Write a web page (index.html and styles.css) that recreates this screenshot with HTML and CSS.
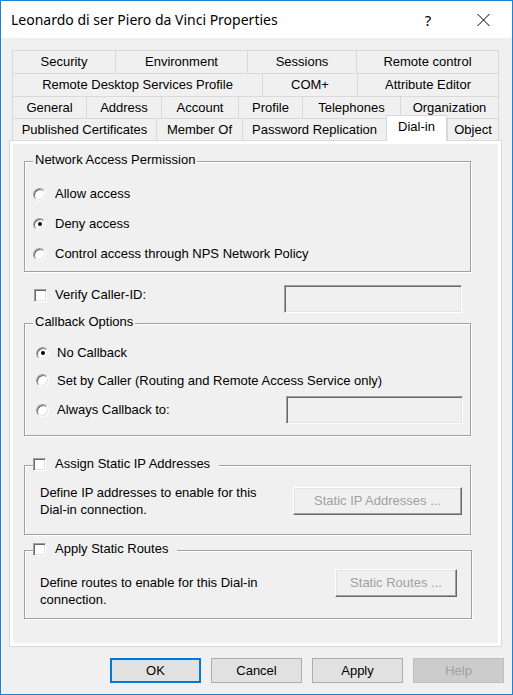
FILE: index.html
```html
<!DOCTYPE html>
<html>
<head>
<meta charset="utf-8">
<title>Properties</title>
<link rel="stylesheet" href="styles.css">
</head>
<body>
<div class="window">
  <div class="titlebar">
    <span class="title">Leonardo di ser Piero da Vinci Properties</span>
    <span class="capbtn help">?</span>
    <span class="capbtn close"><svg width="13" height="12" viewBox="0 0 13 12"><path d="M0.5 0 L12.5 12 M12.5 0 L0.5 12" stroke="#000" stroke-width="1" fill="none"/></svg></span>
  </div>
  <div class="client">
    <div class="tabs">
      <div class="tabrow r1">
        <div class="tab">Security</div>
        <div class="tab">Environment</div>
        <div class="tab">Sessions</div>
        <div class="tab last">Remote control</div>
      </div>
      <div class="tabrow r2">
        <div class="tab">Remote Desktop Services Profile</div>
        <div class="tab">COM+</div>
        <div class="tab last">Attribute Editor</div>
      </div>
      <div class="tabrow r3">
        <div class="tab">General</div>
        <div class="tab">Address</div>
        <div class="tab">Account</div>
        <div class="tab">Profile</div>
        <div class="tab">Telephones</div>
        <div class="tab last">Organization</div>
      </div>
      <div class="tabrow r4">
        <div class="tab">Published Certificates</div>
        <div class="tab">Member Of</div>
        <div class="tab">Password Replication</div>
        <div class="tab sel">Dial-in</div>
        <div class="tab last">Object</div>
      </div>
    </div>
    <div class="pane">
      <div class="page">
        <div class="group g1">
          <div class="legend">Network Access Permission</div>
          <div class="opts">
            <div class="row"><span class="radio"></span><span class="lbl">Allow access</span></div>
            <div class="row"><span class="radio on"></span><span class="lbl">Deny access</span></div>
            <div class="row"><span class="radio"></span><span class="lbl">Control access through NPS Network Policy</span></div>
          </div>
        </div>

        <div class="verify">
          <div class="chkline"><span class="check"></span><span class="lbl">Verify Caller-ID:</span></div>
          <div class="edit e1"></div>
        </div>

        <div class="group g2">
          <div class="legend">Callback Options</div>
          <div class="opts2">
            <div class="row2 a"><span class="radio on"></span><span class="lbl">No Callback</span></div>
            <div class="row2 b"><span class="radio"></span><span class="lbl">Set by Caller (Routing and Remote Access Service only)</span></div>
            <div class="row2 c"><span class="radio"></span><span class="lbl">Always Callback to:</span><div class="edit e2"></div></div>
          </div>
        </div>

        <div class="group g3">
          <div class="legend chklegend"><span class="check"></span><span class="lbl">Assign Static IP Addresses</span></div>
          <div class="gbody centered">
            <div class="desc">Define IP addresses to enable for this<br>Dial-in connection.</div>
            <div class="pbtn ip">Static IP Addresses ...</div>
          </div>
        </div>

        <div class="group g4">
          <div class="legend chklegend"><span class="check"></span><span class="lbl">Apply Static Routes</span></div>
          <div class="gbody top">
            <div class="desc">Define routes to enable for this Dial-in<br>connection.</div>
            <div class="pbtn routes">Static Routes ...</div>
          </div>
        </div>
      </div>
    </div>
    <div class="buttons">
      <div class="btn default">OK</div>
      <div class="btn">Cancel</div>
      <div class="btn">Apply</div>
      <div class="btn disabled">Help</div>
    </div>
  </div>
</div>
</body>
</html>
```

FILE: styles.css
```css
* { box-sizing: border-box; }
html, body { margin: 0; padding: 0; }
body {
  width: 513px;
  height: 695px;
  font-family: "Liberation Sans", Arial, sans-serif;
  font-size: 13px;
  line-height: 16px;
  color: #000;
  background: #f0f0f0;
}
.window {
  width: 513px;
  height: 695px;
  border: 1px solid #1883d7;
  display: flex;
  flex-direction: column;
  background: #f0f0f0;
}
.titlebar {
  height: 37px;
  flex: none;
  background: #fff;
  display: flex;
  align-items: center;
}
.title {
  flex: 1;
  padding-left: 10px;
  font-family: "Noto Sans", sans-serif;
  font-size: 14px;
  color: #000;
}
.capbtn {
  width: 56px;
  height: 37px;
  display: flex;
  align-items: center;
  justify-content: center;
}
.help {
  font-family: "Noto Sans", sans-serif;
  font-size: 15px;
}
.close { padding-right: 2px; }
.client {
  flex: 1;
  display: flex;
  flex-direction: column;
  padding: 12px 8px 0 8px;
}
.tabs {
  margin-left: 3px;
  width: 487px;
  position: relative;
  z-index: 1;
}
.tabrow { display: grid; }
.r1 { grid-template-columns: 103px 132px 109px 143px; height: 23px; }
.r2 { grid-template-columns: 250px 95px 142px; height: 23px; }
.r3 { grid-template-columns: 74px 75px 77px 64px 98px 99px; height: 22px; }
.r4 { grid-template-columns: 144px 86px 144px 61px 52px; height: 22px; }
.tab {
  border-top: 1px solid #d9d9d9;
  border-left: 1px solid #d9d9d9;
  background: #f0f0f0;
  display: flex;
  align-items: center;
  justify-content: center;
  white-space: nowrap;
}
.tab.last { border-right: 1px solid #d9d9d9; }
.tab.sel {
  margin: -3px 0 -1px 0;
  background: #fff;
  border-right: 1px solid #d9d9d9;
  padding-bottom: 3px;
}
.pane {
  width: 493px;
  height: 507px;
  border: 1px solid #d9d9d9;
  background: #fff;
  padding: 3px;
  flex: none;
}
.page {
  height: 100%;
  background: #f0f0f0;
  padding: 17px 0 0 11px;
}
.group {
  width: 447px;
  border: 1px solid #a0a0a0;
  box-shadow: inset 1px 1px 0 #fff, 1px 1px 0 #fff;
}
.legend {
  width: fit-content;
  margin: -10px 0 0 8px;
  padding: 0 2px;
  background: #f0f0f0;
  height: 16px;
  white-space: nowrap;
}
.chklegend {
  display: flex;
  align-items: center;
  padding: 0 9px 0 0;
}
.chklegend .lbl { margin-left: 9px; }
.opts { margin-top: 11px; padding-left: 8px; padding-bottom: 2px; }
.row { height: 30px; display: flex; align-items: center; }
.row .lbl { margin-left: 9px; }
.radio {
  width: 13px;
  height: 13px;
  flex: none;
  border-radius: 50%;
  border: 1px solid;
  border-color: #a0a0a0 #fff #fff #a0a0a0;
  background: #fff;
  box-shadow: inset 1px 1px 0 #696969, inset -1px -1px 0 #e3e3e3;
  display: flex;
  align-items: center;
  justify-content: center;
}
.radio.on::after {
  content: "";
  width: 4px;
  height: 4px;
  border-radius: 50%;
  background: #000;
}
.check {
  width: 13px;
  height: 13px;
  flex: none;
  border: 1px solid;
  border-color: #a0a0a0 #fff #fff #a0a0a0;
  background: #fff;
  box-shadow: inset 1px 1px 0 #696969, inset -1px -1px 0 #e3e3e3;
}
.verify {
  margin-top: 13px;
  height: 28px;
  display: flex;
  align-items: flex-start;
  margin-left: -11px;
}
.chkline {
  flex: 1;
  display: flex;
  align-items: center;
  height: 16px;
  margin-top: 2px;
  padding-left: 21px;
}
.chkline .lbl { margin-left: 8px; }
.edit {
  height: 28px;
  flex: none;
  border: 1px solid;
  border-color: #a0a0a0 #fff #fff #a0a0a0;
  box-shadow: inset 1px 1px 0 #696969, inset -1px -1px 0 #e3e3e3;
  background: #f0f0f0;
}
.e1 { width: 178px; margin-right: 36px; }
.g2 { margin-top: 10px; }
.opts2 { margin-top: 9px; padding-left: 11px; padding-bottom: 11px; }
.row2 { display: flex; align-items: center; }
.row2 .lbl { margin-left: 8px; }
.row2.a { height: 28px; }
.row2.b { height: 27px; }
.row2.c { height: 28px; margin-top: 2px; }
.e2 { width: 177px; margin-left: auto; margin-right: 7px; }
.g3 { margin-top: 29px; }
.g4 { margin-top: 15px; width: 448px; }
.gbody {
  display: flex;
  padding-left: 15px;
}
.centered { align-items: center; margin-top: 12px; padding-bottom: 16px; }
.top { align-items: flex-start; margin-top: 12px; padding-bottom: 10px; }
.desc { line-height: 17px; white-space: nowrap; }
.top .desc { margin-top: 5px; }
.pbtn {
  height: 28px;
  margin-left: auto;
  border: 1px solid;
  border-color: #fff #696969 #696969 #fff;
  box-shadow: inset -1px -1px 0 #a0a0a0, inset 1px 1px 0 #e3e3e3;
  background: #f0f0f0;
  color: #a0a0a0;
  display: flex;
  align-items: center;
  justify-content: center;
  white-space: nowrap;
}
.ip { width: 169px; margin-right: 8px; }
.routes { width: 122px; margin-right: 14px; }
.buttons {
  margin-top: 11px;
  display: flex;
  justify-content: flex-end;
  gap: 10px;
}
.btn {
  width: 91px;
  height: 25px;
  background: #e1e1e1;
  border: 1px solid #adadad;
  display: flex;
  align-items: center;
  justify-content: center;
}
.btn.default { border: 2px solid #0078d7; }
.btn.disabled { background: #cccccc; border-color: #bfbfbf; color: #a0a0a0; }
```
